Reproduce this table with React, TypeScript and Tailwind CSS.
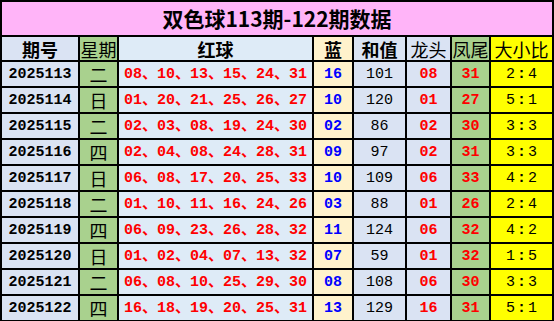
import React from "react";

const rows = [
  { id: "2025113", day: "二", red: ["08", "10", "13", "15", "24", "31"], blue: "16", sum: "101", head: "08", tail: "31", ratio: ["2", "4"] },
  { id: "2025114", day: "日", red: ["01", "20", "21", "25", "26", "27"], blue: "10", sum: "120", head: "01", tail: "27", ratio: ["5", "1"] },
  { id: "2025115", day: "二", red: ["02", "03", "08", "19", "24", "30"], blue: "02", sum: "86", head: "02", tail: "30", ratio: ["3", "3"] },
  { id: "2025116", day: "四", red: ["02", "04", "08", "24", "28", "31"], blue: "09", sum: "97", head: "02", tail: "31", ratio: ["3", "3"] },
  { id: "2025117", day: "日", red: ["06", "08", "17", "20", "25", "33"], blue: "10", sum: "109", head: "06", tail: "33", ratio: ["4", "2"] },
  { id: "2025118", day: "二", red: ["01", "10", "11", "16", "24", "26"], blue: "03", sum: "88", head: "01", tail: "26", ratio: ["2", "4"] },
  { id: "2025119", day: "四", red: ["06", "09", "23", "26", "28", "32"], blue: "11", sum: "124", head: "06", tail: "32", ratio: ["4", "2"] },
  { id: "2025120", day: "日", red: ["01", "02", "04", "07", "13", "32"], blue: "07", sum: "59", head: "01", tail: "32", ratio: ["1", "5"] },
  { id: "2025121", day: "二", red: ["06", "08", "10", "25", "29", "30"], blue: "08", sum: "108", head: "06", tail: "30", ratio: ["3", "3"] },
  { id: "2025122", day: "四", red: ["16", "18", "19", "20", "25", "31"], blue: "13", sum: "129", head: "16", tail: "31", ratio: ["5", "1"] },
];

const mono = "font-['Liberation_Mono','Noto_Sans_CJK_SC',monospace]";
const cjk = "font-['Noto_Sans_CJK_SC',sans-serif]";
const cell = "flex items-center justify-center h-[24px] leading-none";
const head = `flex items-center justify-center h-[23px] leading-none text-[18px] text-black ${cjk}`;

export default function App() {
  return (
    <div className="w-[554px] h-[321px] overflow-hidden bg-white">
      <div className="grid w-[554px] grid-cols-[76px_37px_193px_38px_51px_43px_37px_61px] gap-[2px] bg-black p-[2px]">
        <div className={`col-span-8 flex h-[33px] items-center justify-center bg-[#ffb4f8] text-[21px] font-bold leading-none text-black ${cjk}`}>
          双色球113期-122期数据
        </div>

        <div className={`${head} bg-[#dae3f3] font-bold`}>期号</div>
        <div className={`${head} bg-[#a9d18e]`}>星期</div>
        <div className={`${head} bg-[#deebf7] font-bold`}>红球</div>
        <div className={`${head} bg-[#fff2cc] font-bold`}>蓝</div>
        <div className={`${head} bg-[#dae3f3] font-bold`}>和值</div>
        <div className={`${head} bg-[#dae3f3]`}>龙头</div>
        <div className={`${head} bg-[#a9d18e]`}>凤尾</div>
        <div className={`${head} bg-[#ffff00]`}>大小比</div>

        {rows.map((r) => (
          <React.Fragment key={r.id}>
            <div className={`${cell} bg-[#dae3f3] text-[15px] font-bold text-black ${mono}`}>{r.id}</div>
            <div className={`${cell} bg-[#a9d18e] text-[18px] text-black ${cjk}`}>{r.day}</div>
            <div className={`${cell} bg-[#deebf7] text-[15px] font-bold text-[#ff0000] ${mono}`}>
              {r.red.join("、")}
            </div>
            <div className={`${cell} bg-[#fff2cc] text-[15px] font-bold text-[#0000ff] ${mono}`}>{r.blue}</div>
            <div className={`${cell} bg-[#dae3f3] text-[15px] text-black ${mono}`}>{r.sum}</div>
            <div className={`${cell} bg-[#dae3f3] text-[15px] font-bold text-[#ff0000] ${mono}`}>{r.head}</div>
            <div className={`${cell} bg-[#a9d18e] text-[15px] font-bold text-[#ff0000] ${mono}`}>{r.tail}</div>
            <div className={`${cell} bg-[#ffff00] text-[15px] text-black ${mono}`}>
              {r.ratio[0]}
              <span className="mx-[2px] font-bold">:</span>
              {r.ratio[1]}
            </div>
          </React.Fragment>
        ))}
      </div>
    </div>
  );
}
